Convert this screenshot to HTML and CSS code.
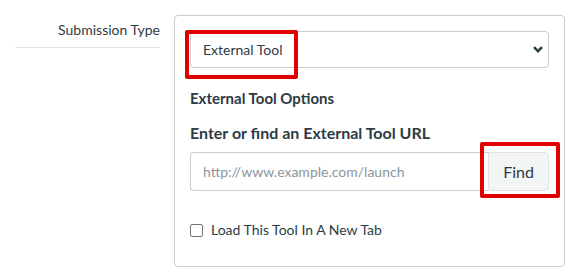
FILE: index.html
```html
<!DOCTYPE html>
<html lang="en">
<head>
<meta charset="utf-8">
<title>Submission Type</title>
<link rel="stylesheet" href="styles.css">
</head>
<body>
<div class="row">
  <div class="label-col"><span class="row-label">Submission Type</span></div>
  <div class="panel">
    <div class="select">
      <span class="select-text">External Tool</span>
      <svg class="chevron" width="10" height="7" viewBox="0 0 10 7" aria-hidden="true"><path d="M1 1.2 L5 5.2 L9 1.2" fill="none" stroke="#2d3b45" stroke-width="2.4"/></svg>
      <span class="highlight hl-select"></span>
    </div>
    <h4 class="options-title">External Tool Options</h4>
    <div class="url-label">Enter or find an External Tool URL</div>
    <div class="input-group">
      <div class="url-input">http://www.example.com/launch</div>
      <div class="find-btn">Find<span class="highlight hl-find"></span></div>
    </div>
    <div class="check-row">
      <span class="checkbox"></span>
      <span class="check-label">Load This Tool In A New Tab</span>
    </div>
  </div>
</div>
</body>
</html>
```

FILE: styles.css
```css
html, body {
  margin: 0;
  padding: 0;
  background: #ffffff;
}
body {
  font-family: Lato, "Open Sans", "Liberation Sans", sans-serif;
  color: #2d3b45;
  font-size: 14px;
}
.row {
  display: flex;
  align-items: flex-start;
  padding-top: 15px;
  padding-left: 15px;
}
.label-col {
  width: 145px;
  box-sizing: border-box;
  padding-top: 5px;
  height: 33px;
  border-bottom: 1px solid #e2e4e6;
  text-align: right;
  line-height: 20px;
}
.row-label {
  font-size: 14px;
}
.panel {
  margin-left: 14px;
  width: 391px;
  box-sizing: border-box;
  border: 1px solid #c7cdd1;
  border-radius: 4px;
  padding: 15px 15px 26px 15px;
}
.select {
  position: relative;
  height: 37px;
  box-sizing: border-box;
  border: 1px solid #c7cdd1;
  border-radius: 4px;
  display: flex;
  align-items: center;
  justify-content: space-between;
  padding: 0 3px 0 12px;
  font-size: 14px;
}
.chevron {
  margin-right: 2px;
}
.highlight {
  position: absolute;
  box-sizing: border-box;
  border: 4px solid #e00000;
  border-radius: 2px;
  pointer-events: none;
}
.hl-select {
  left: -6px;
  top: -2px;
  width: 113px;
  height: 49px;
}
.options-title {
  margin: 20px 0 0 0;
  font-size: 15px;
  font-weight: 700;
  line-height: 20px;
}
.url-label {
  margin-top: 14px;
  font-size: 16px;
  font-weight: 700;
  line-height: 22px;
}
.input-group {
  display: flex;
  margin-top: 8px;
  height: 39px;
}
.url-input {
  flex: 1;
  box-sizing: border-box;
  border: 1px solid #c7cdd1;
  border-right: none;
  border-radius: 4px 0 0 4px;
  padding-left: 12px;
  display: flex;
  align-items: center;
  color: #8b969e;
  font-size: 14px;
}
.find-btn {
  position: relative;
  width: 61px;
  box-sizing: border-box;
  border: 1px solid #dfe2e4;
  border-radius: 0 4px 4px 0;
  background: #f3f4f4;
  display: flex;
  align-items: center;
  justify-content: center;
  font-size: 16px;
}
.hl-find {
  left: -9px;
  top: -11px;
  width: 80px;
  height: 56px;
}
.check-row {
  margin-top: 29px;
  display: flex;
  align-items: center;
  line-height: 20px;
}
.checkbox {
  width: 13px;
  height: 13px;
  box-sizing: border-box;
  border: 1px solid #767676;
  border-radius: 2px;
  margin-right: 8px;
  background: #fff;
}
.check-label {
  font-size: 14px;
}
```
